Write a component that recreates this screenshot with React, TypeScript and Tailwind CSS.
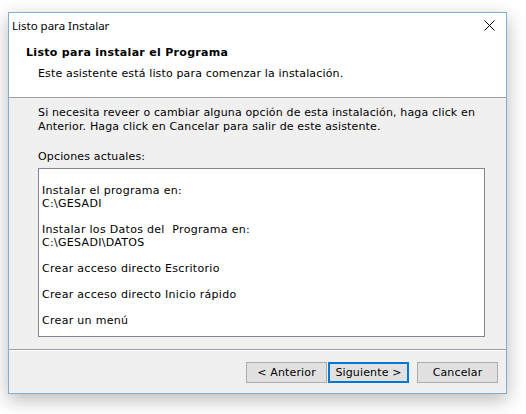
const body = { fontFamily: '"DejaVu Sans", sans-serif' }

const options = [
  "Instalar el programa en:",
  "C:\\GESADI",
  "",
  "Instalar los Datos del\u00a0 Programa en:",
  "C:\\GESADI\\DATOS",
  "",
  "Crear acceso directo Escritorio",
  "",
  "Crear acceso directo Inicio rápido",
  "",
  "Crear un menú",
]

const CloseIcon = () => (
  <svg width="11" height="11" viewBox="0 0 11 11" className="block">
    <path d="M0.5 0.5 L10.5 10.5 M10.5 0.5 L0.5 10.5" stroke="#000" strokeWidth="1" fill="none" />
  </svg>
)

type ButtonProps = { label: string; primary?: boolean }
const DialogButton = ({ label, primary }: ButtonProps) => (
  <button
    className={`w-[81px] h-[21px] flex items-center justify-center bg-[#e1e1e1] text-[11px] tracking-[0.15px] text-black leading-none ${
      primary ? "border-2 border-[#0078d7]" : "border border-[#adadad]"
    }`}
    style={body}
  >
    {label}
  </button>
)

export default function App() {
  return (
    <div className="w-[526px] h-[414px] bg-white pl-[8px] pt-[12px]">
      <div className="w-[499px] h-[382px] border border-[#7eaed3] bg-[#f0f0f0] flex flex-col shadow-[0_6px_18px_rgba(0,0,0,0.28)]">
        {/* title + header */}
        <div className="h-[84px] bg-white flex flex-col">
          <div className="h-[25px] flex items-center justify-between pl-[3px] pr-[11px]">
            <span className="text-[11.5px] text-black" style={{ fontFamily: '"Noto Sans", "Open Sans", sans-serif' }}>
              Listo para Instalar
            </span>
            <CloseIcon />
          </div>
          <div className="mt-[8px] pl-[17px] text-[11px] leading-[14px] tracking-[0.3px] font-bold text-black" style={body}>
            Listo para instalar el Programa
          </div>
          <div className="mt-[7px] pl-[29px] text-[11px] leading-[14px] tracking-[0.15px] text-black" style={body}>
            Este asistente está listo para comenzar la instalación.
          </div>
        </div>
        <div className="h-px bg-[#a0a0a0]" />

        {/* body */}
        <div className="pl-[29px] pt-[8px] text-[11px] leading-[14px] tracking-[0.15px] text-black" style={body}>
          <p>Si necesita reveer o cambiar alguna opción de esta instalación, haga click en</p>
          <p>Anterior. Haga click en Cancelar para salir de este asistente.</p>
          <p className="mt-[16px]">Opciones actuales:</p>
          <div className="mt-[4px] w-[447px] h-[169px] bg-white border border-[#828790] pl-[3px] pt-[15px] leading-[13px] tracking-[0.3px]">
            {options.map((line, i) => (
              <div key={i} className="h-[13px] whitespace-pre">
                {line}
              </div>
            ))}
          </div>
        </div>

        <div className="mt-[12px] h-px bg-[#a0a0a0]" />
        <div className="h-px bg-white" />

        <div className="mt-[11px] flex justify-end pr-[8px]">
          <DialogButton label="< Anterior" />
          <div className="w-[1px]" />
          <DialogButton label="Siguiente >" primary />
          <div className="w-[8px]" />
          <DialogButton label="Cancelar" />
        </div>
      </div>
    </div>
  )
}
